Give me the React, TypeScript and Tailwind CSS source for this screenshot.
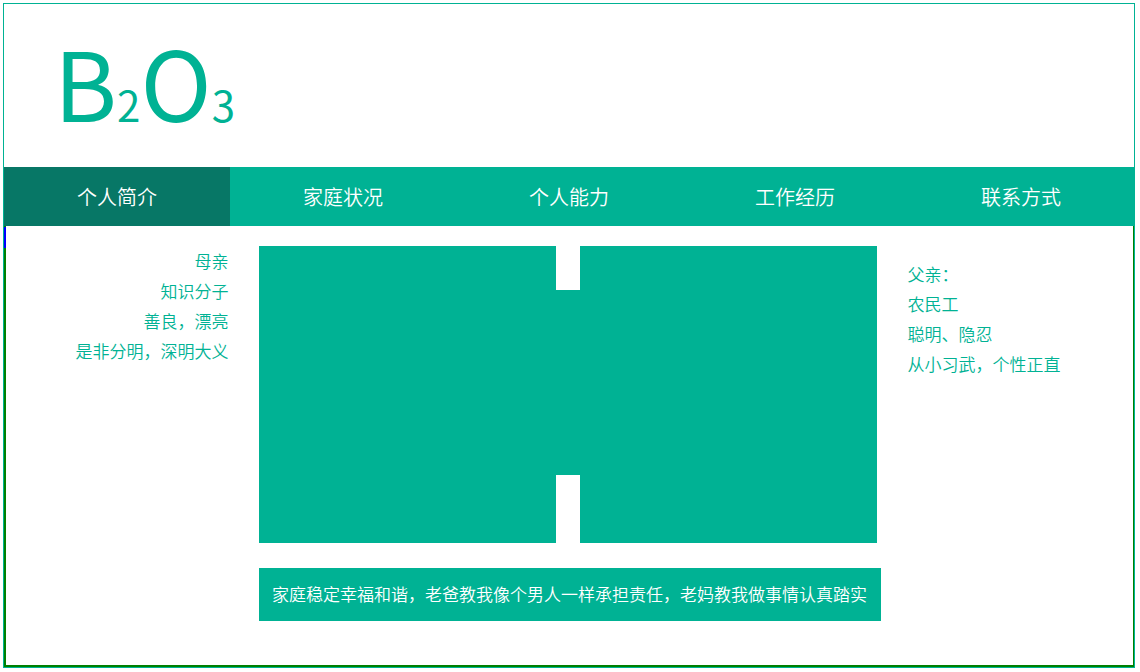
const tabs = ["个人简介", "家庭状况", "个人能力", "工作经历", "联系方式"];
const mother = ["母亲", "知识分子", "善良，漂亮", "是非分明，深明大义"];
const father = ["父亲：", "农民工", "聪明、隐忍", "从小习武，个性正直"];

export default function App() {
  return (
    <div
      lang="zh-CN"
      className="bg-white pt-[3px] pr-[5px] pb-1 pl-[3px] font-['Noto_Sans_CJK_SC',sans-serif] font-[350] text-[#00b294]"
    >
      <div className="border border-[#00b294]">
        <header className="px-[50px] pt-[9px] pb-[18px]">
          <h1 className="text-[96px] leading-[136px] font-normal whitespace-nowrap">
            B<span className="text-[42px] leading-none">2</span>O
            <span className="text-[42px] leading-none">3</span>
          </h1>
        </header>

        <nav className="grid grid-cols-5 bg-[#00b294]">
          {tabs.map((tab, i) => (
            <a
              key={tab}
              href="#"
              aria-current={i === 0 ? "page" : undefined}
              className={
                "py-4 text-center text-xl leading-[27px] text-white " +
                (i === 0 ? "bg-[#077766]" : "bg-[#00b294]")
              }
            >
              {tab}
            </a>
          ))}
        </nav>

        <main className="relative border-r border-b-2 border-l-2 border-[#008000] pt-5 pb-11">
          <span className="absolute top-px -left-0.5 h-[21px] w-0.5 bg-[#0000ff]" />
          <div className="grid grid-cols-[1fr_622px_1fr]">
            <section className="pr-[30px] text-right text-[17px] leading-[30px]">
              {mother.map((line) => (
                <p key={line}>{line}</p>
              ))}
            </section>

            <div>
              <div className="flex items-start">
                <div className="h-[297px] w-[297px] bg-[#00b294]" />
                <div className="mt-11 h-[185px] w-6 bg-[#00b294]" />
                <div className="h-[297px] w-[297px] bg-[#00b294]" />
              </div>
              <p className="mt-[25px] bg-[#00b294] pt-3 pb-[14px] text-center text-[17px] leading-[27px] whitespace-nowrap text-white">
                家庭稳定幸福和谐，老爸教我像个男人一样承担责任，老妈教我做事情认真踏实
              </p>
            </div>

            <section className="pt-[13px] pl-[27px] text-[17px] leading-[30px]">
              {father.map((line) => (
                <p key={line}>{line}</p>
              ))}
            </section>
          </div>
        </main>
      </div>
    </div>
  );
}
